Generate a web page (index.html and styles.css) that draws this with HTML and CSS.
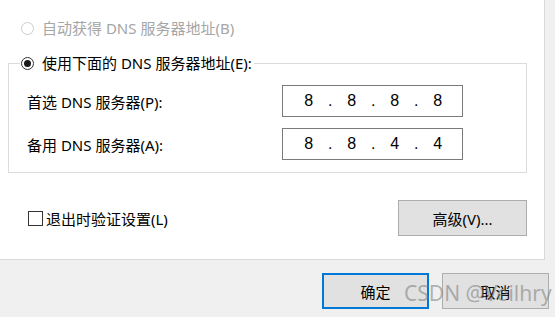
FILE: index.html
```html
<!DOCTYPE html>
<html lang="zh-CN">

<head>
  <meta charset="UTF-8">
  <title>DNS 服务器设置</title>
  <link rel="stylesheet" href="styles.css">
</head>

<body>
  <div class="panel">
    <div class="option disabled">
      <span class="radio"></span>自动获得 DNS 服务器地址(B)
    </div>

    <fieldset class="group">
      <legend class="option">
        <span class="radio checked"></span>使用下面的 DNS 服务器地址(E):
      </legend>

      <div class="field-row">
        <label>首选 DNS 服务器(P):</label>
        <div class="ip-box">
          <span>8</span><span>.</span><span>8</span><span>.</span><span>8</span><span>.</span><span>8</span>
        </div>
      </div>

      <div class="field-row">
        <label>备用 DNS 服务器(A):</label>
        <div class="ip-box">
          <span>8</span><span>.</span><span>8</span><span>.</span><span>4</span><span>.</span><span>4</span>
        </div>
      </div>
    </fieldset>

    <div class="extra-row">
      <label class="check"><span class="checkbox"></span>退出时验证设置(L)</label>
      <button class="btn advanced">高级(V)...</button>
    </div>
  </div>

  <div class="footer">
    <button class="btn default">确定</button>
    <button class="btn">取消</button>
  </div>

  <div class="watermark">CSDN @Veilhry</div>
</body>

</html>
```

FILE: styles.css
```css
body {
  font-family: "Noto Sans", "Noto Sans CJK SC", sans-serif;
  font-size: 15px;
  color: #000;
  margin: 0;
  padding: 0;
  width: 555px;
  height: 317px;
  background-color: #f0f0f0;
  position: relative;
  overflow: hidden;
}

.panel {
  width: 545px;
  height: 260px;
  background-color: #fff;
  border-right: 1px solid #d9d9d9;
  border-bottom: 1px solid #d9d9d9;
  padding-top: 16px;
  box-sizing: border-box;
}

.option {
  display: flex;
  align-items: center;
  height: 24px;
  line-height: 24px;
  white-space: nowrap;
}

.panel > .option {
  padding-left: 21px;
}

.option.disabled {
  color: #a6a6a6;
}

.radio {
  width: 13px;
  height: 13px;
  border: 1px solid #333;
  border-radius: 50%;
  box-sizing: border-box;
  margin-right: 8px;
  background-color: #fff;
  display: flex;
  justify-content: center;
  align-items: center;
}

.disabled .radio {
  border-color: #cccccc;
}

.radio.checked::after {
  content: "";
  width: 7px;
  height: 7px;
  border-radius: 50%;
  background-color: #1a1a1a;
}

.group {
  margin: 11px 17px 0 8px;
  padding: 10px 0 12px 11px;
  border: 1px solid #dcdcdc;
}

.group legend {
  padding: 0 2px 0 1px;
  margin-left: 0;
  background-color: #fff;
}

.field-row {
  display: flex;
  align-items: center;
}

.field-row + .field-row {
  margin-top: 11px;
}

.field-row label {
  width: 262px;
  padding-left: 7px;
  box-sizing: border-box;
}

.ip-box {
  width: 181px;
  height: 32px;
  border: 1px solid #7a7a7a;
  box-sizing: border-box;
  display: flex;
  align-items: center;
  padding-left: 15px;
  font-family: "Liberation Sans", Arial, sans-serif;
  font-size: 16px;
}

.ip-box span {
  width: 21.5px;
  text-align: center;
}

.extra-row {
  display: flex;
  justify-content: space-between;
  align-items: center;
  margin: 27px 17px 0 28px;
}

.check {
  display: flex;
  align-items: center;
}

.checkbox {
  width: 15px;
  height: 15px;
  border: 1px solid #333;
  box-sizing: border-box;
  margin-right: 3px;
}

.btn {
  font-family: inherit;
  font-size: 15px;
  color: #000;
  background-color: #e1e1e1;
  border: 1px solid #adadad;
  padding: 0;
  height: 36px;
  cursor: pointer;
}

.btn.advanced {
  width: 129px;
}

.footer {
  display: flex;
  justify-content: flex-end;
  gap: 13px;
  padding: 13px 6px 0 0;
}

.footer .btn {
  width: 107px;
}

.btn.default {
  border: 2px solid #0078d7;
}

.watermark {
  position: absolute;
  left: 404px;
  top: 279px;
  font-size: 21px;
  color: rgba(120, 120, 120, 0.55);
  font-family: "Noto Sans", sans-serif;
  pointer-events: none;
}
```
